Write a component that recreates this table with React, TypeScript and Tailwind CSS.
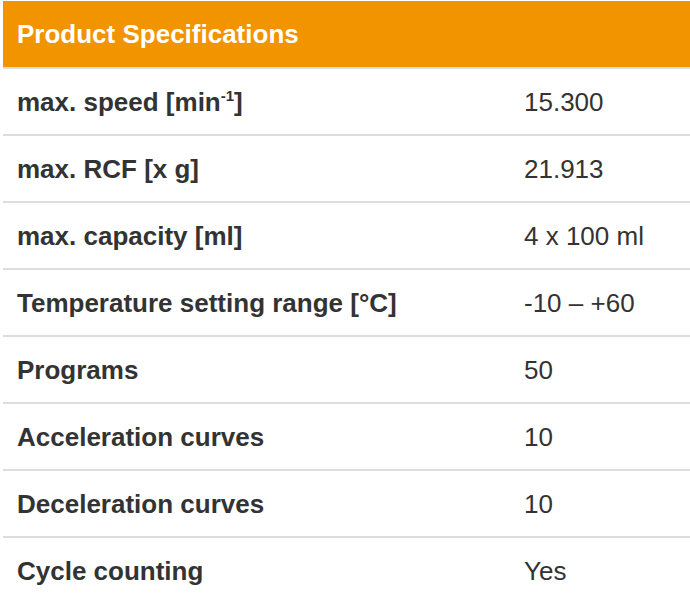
import React from "react";

const rows: [React.ReactNode, string][] = [
  [<>max. speed [min<sup className="text-[15px] relative -top-[10px] align-baseline">-1</sup>]</>, "15.300"],
  ["max. RCF [x g]", "21.913"],
  ["max. capacity [ml]", "4 x 100 ml"],
  ["Temperature setting range [°C]", "-10 – +60"],
  ["Programs", "50"],
  ["Acceleration curves", "10"],
  ["Deceleration curves", "10"],
  ["Cycle counting", "Yes"],
];

export default function App() {
  return (
    <div className="bg-white w-[690px] h-[593px] overflow-hidden pt-[1px] pl-[3px]" style={{ fontFamily: '"Liberation Sans", Arial, sans-serif' }}>
      <div className="bg-[#f29400] h-[66px] flex items-center pl-[14px] text-white font-bold text-[26px] leading-none">
        Product Specifications
      </div>
      {rows.map(([label, value], i) => (
        <div key={i} className="border-t-2 border-[#dddddd] h-[67px] flex items-center text-[#333333] text-[26px] leading-none">
          <div className="w-[521px] pl-[14px] font-bold">{label}</div>
          <div>{value}</div>
        </div>
      ))}
    </div>
  );
}
